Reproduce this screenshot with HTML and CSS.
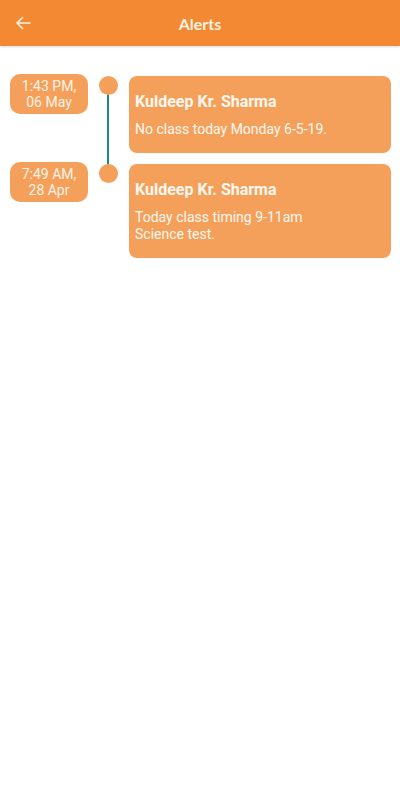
FILE: index.html
```html
<!DOCTYPE html>
<html lang="en">
<head>
  <meta charset="UTF-8">
  <meta name="viewport" content="width=device-width, initial-scale=1.0">
  <title>Alerts</title>
  <link rel="stylesheet" href="styles.css">
</head>
<body>

  <header class="app-bar">
    <span class="back">
      <svg width="16" height="14" viewBox="0 0 16 14">
        <path d="M15 7H2M7.5 1.5L2 7l5.5 5.5" fill="none" stroke="#fff3e0" stroke-width="1.6" stroke-linecap="round" stroke-linejoin="round"/>
      </svg>
    </span>
    <h1>Alerts</h1>
  </header>

  <!-- timeline of alerts -->
  <div class="timeline">

    <div class="alert-row">
      <div class="alert-date">1:43 PM,<br>06 May</div>
      <div class="dot-col"><span class="dot"></span></div>
      <div class="alert-card">
        <div class="alert-name">Kuldeep Kr. Sharma</div>
        <div class="alert-msg">No class today Monday 6-5-19.</div>
      </div>
    </div>

    <div class="alert-row">
      <div class="alert-date">7:49 AM,<br>28 Apr</div>
      <div class="dot-col"><span class="dot"></span></div>
      <div class="alert-card">
        <div class="alert-name">Kuldeep Kr. Sharma</div>
        <div class="alert-msg">Today class timing 9-11am<br>Science test.</div>
      </div>
    </div>

  </div>

</body>
</html>
```

FILE: styles.css
```css
body {
  margin: 0;
  font-family: Roboto, "Noto Sans", sans-serif;
  background: #fff;
}

.app-bar {
  height: 46px;
  background: #f38a33;
  display: flex;
  align-items: center;
  position: relative;
  box-shadow: 0 1px 2px rgba(0, 0, 0, 0.15);
}

.app-bar h1 {
  flex: 1;
  margin: 0;
  text-align: center;
  font-family: Lato, sans-serif;
  font-size: 16px;
  font-weight: 700;
  color: #fff3e0;
}

.back {
  position: absolute;
  left: 15px;
  top: 16px;
  display: flex;
}

.timeline {
  display: flex;
  flex-direction: column;
  gap: 11px;
  padding: 30px 9px 0 10px;
}

.alert-row {
  display: flex;
  align-items: flex-start;
}

.alert-date {
  width: 78px;
  flex-shrink: 0;
  margin-top: -2px;
  padding: 4px 0;
  border-radius: 10px;
  background: #f5a05a;
  color: #fff3e6;
  text-align: center;
  font-size: 14px;
  line-height: 16px;
}

.dot-col {
  width: 41px;
  flex-shrink: 0;
  align-self: stretch;
  position: relative;
  display: flex;
  justify-content: center;
}

.dot {
  width: 19px;
  height: 19px;
  border-radius: 50%;
  background: #f5a05a;
  position: relative;
  z-index: 1;
}

.alert-row:not(:last-child) .dot-col::after {
  content: "";
  position: absolute;
  left: 19px;
  top: 9px;
  bottom: -20px;
  width: 2px;
  background: #1f8a7c;
}

.alert-card {
  flex: 1;
  background: #f5a05a;
  border-radius: 8px;
  padding: 16px 6px 15px;
  color: #fff8f0;
}

.alert-name {
  font-size: 16px;
  font-weight: 700;
  line-height: 20px;
  margin-bottom: 9px;
}

.alert-msg {
  font-size: 14px;
  line-height: 17px;
}
```
